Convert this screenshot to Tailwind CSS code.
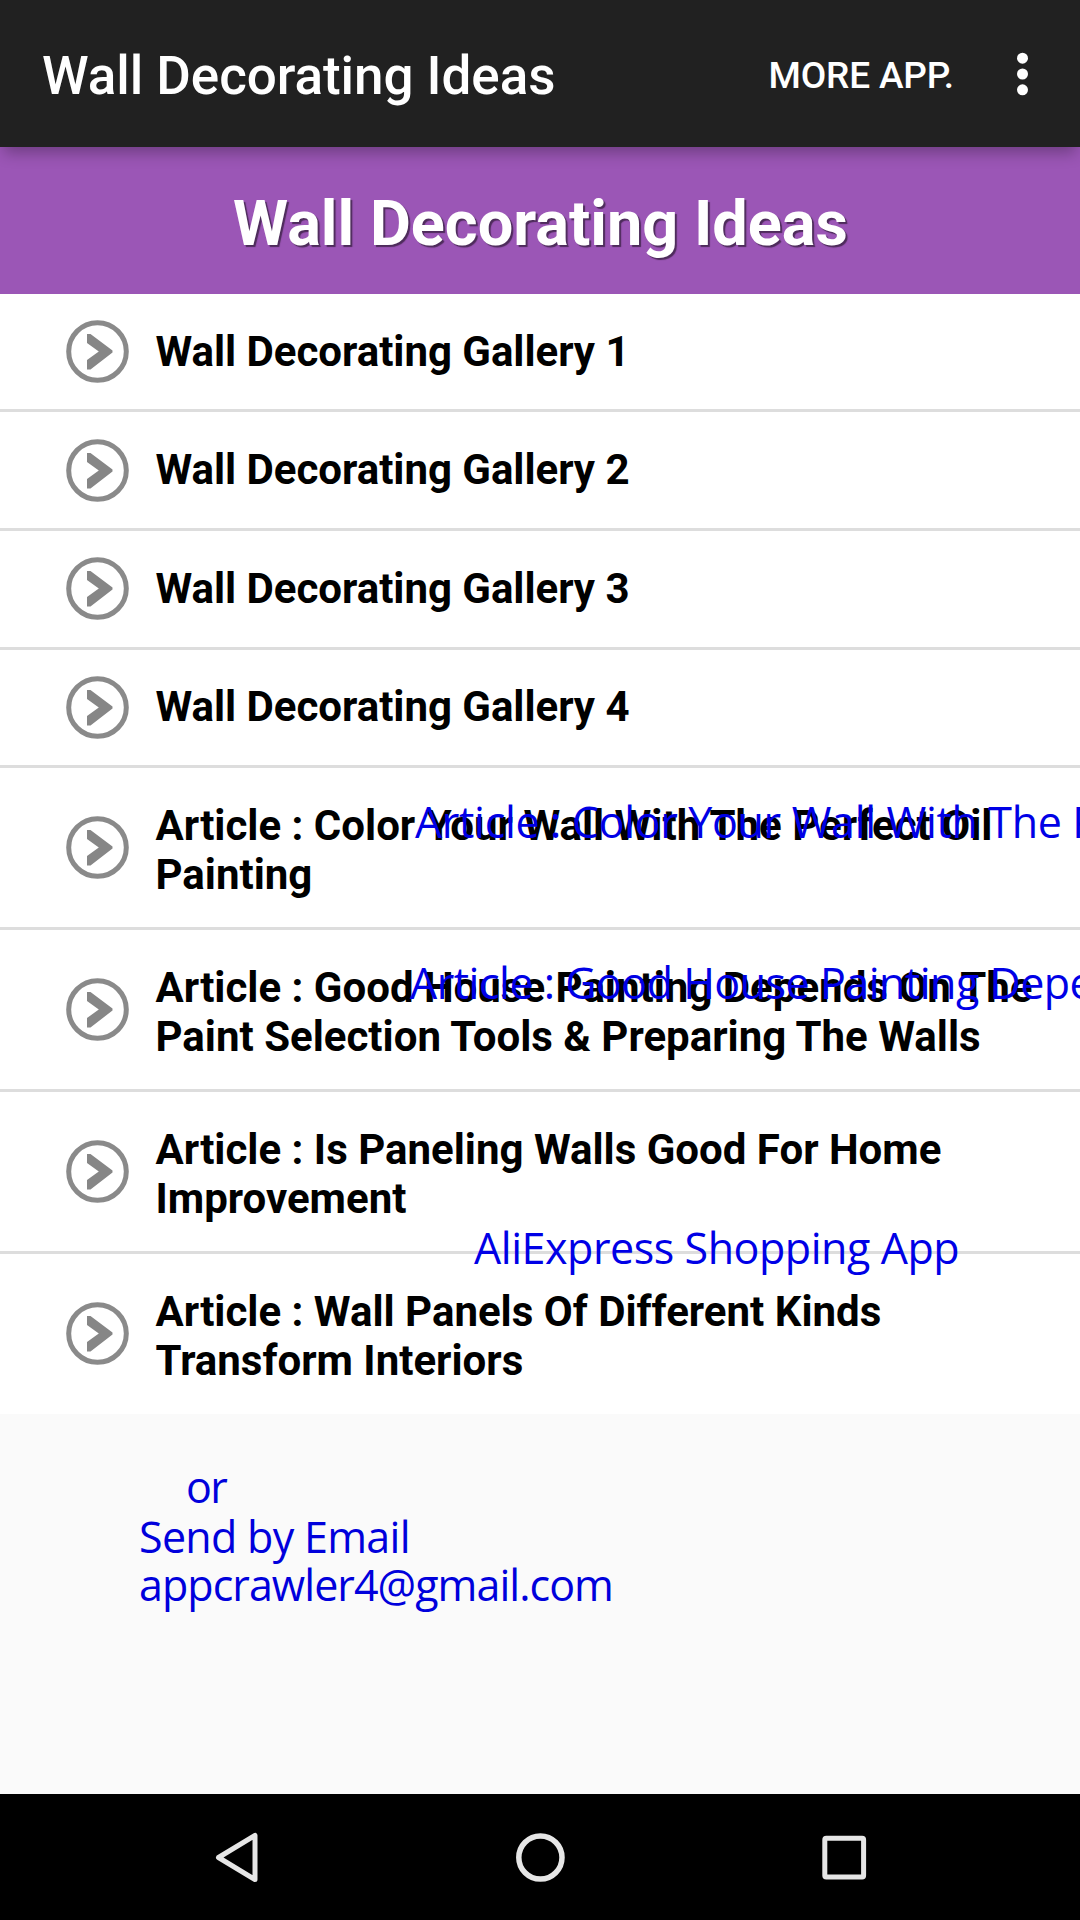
<!DOCTYPE html>
<html lang="en">
<head>
<meta charset="utf-8">
<title>Wall Decorating Ideas</title>
<script src="https://cdn.jsdelivr.net/npm/@tailwindcss/browser@4"></script>
</head>
<body class="bg-black">
<svg class="hidden">
  <symbol id="go" viewBox="0 0 63 63">
    <circle cx="31.5" cy="31.5" r="28.8" fill="none" stroke="#8a8a8a" stroke-width="5"/>
    <path d="M21 14 L24.500 14 L46.500 30.500 V32.500 L24.500 49.500 L21 49.500 V40 L32.800 31.500 L21 23 Z" fill="#868686"/>
  </symbol>
</svg>
<div class="relative flex h-[1920px] w-[1080px] flex-col overflow-hidden bg-[#fafafa] font-['Roboto',sans-serif]">
  <header class="relative z-10 flex h-[147px] shrink-0 items-center bg-[#212121] pl-[42px] text-white shadow-[0_10px_14px_-4px_rgba(0,0,0,0.28)]">
    <h1 class="flex-1 pt-[7px] text-[53px] font-medium tracking-[-0.06px]">Wall Decorating Ideas</h1>
    <span class="pt-1 text-[37px] font-medium tracking-[-0.15px]">MORE APP.</span>
    <svg class="ml-[61px] mr-[50px] h-[46px] w-[15px]" viewBox="0 0 15 46" fill="#fff"><circle cx="7.500" cy="7.200" r="5.500"/><circle cx="7.500" cy="23" r="5.500"/><circle cx="7.500" cy="38.800" r="5.500"/></svg>
  </header>
  <div class="flex h-[147px] shrink-0 items-center justify-center bg-[#9b56b6] pt-[8px] pl-px">
    <h2 class="text-[63px] font-bold text-white [text-shadow:2px_2px_1px_rgba(0,0,0,0.5)]">Wall Decorating Ideas</h2>
  </div>
  <ul class="shrink-0 bg-white text-[42px] leading-[49.5px] font-bold text-black">
    <li class="flex h-[118px] items-center border-b-3 border-[#dddddd] pl-[66px]"><svg class="h-[63px] w-[63px] shrink-0"><use href="#go"/></svg><span class="self-start pt-[32.500px] pl-[26.500px] tracking-[-0.03px]">Wall Decorating Gallery 1</span></li>
    <li class="flex h-[119px] items-center border-b-3 border-[#dddddd] pl-[66px]"><svg class="h-[63px] w-[63px] shrink-0"><use href="#go"/></svg><span class="self-start pt-[32.500px] pl-[26.500px] tracking-[-0.03px]">Wall Decorating Gallery 2</span></li>
    <li class="flex h-[118.5px] items-center border-b-3 border-[#dddddd] pl-[66px]"><svg class="h-[63px] w-[63px] shrink-0"><use href="#go"/></svg><span class="self-start pt-[32.500px] pl-[26.500px] tracking-[-0.03px]">Wall Decorating Gallery 3</span></li>
    <li class="flex h-[118.5px] items-center border-b-3 border-[#dddddd] pl-[66px]"><svg class="h-[63px] w-[63px] shrink-0"><use href="#go"/></svg><span class="self-start pt-[32.500px] pl-[26.500px] tracking-[-0.03px]">Wall Decorating Gallery 4</span></li>
    <li class="flex h-[162px] items-center border-b-3 border-[#dddddd] pl-[66px]"><svg class="h-[63px] w-[63px] shrink-0"><use href="#go"/></svg><span class="self-start pt-[32.500px] pl-[26.500px]">Article : Color Your Wall With The Perfect Oil<br>Painting</span></li>
    <li class="flex h-[162px] items-center border-b-3 border-[#dddddd] pl-[66px]"><svg class="h-[63px] w-[63px] shrink-0"><use href="#go"/></svg><span class="self-start pt-[32.500px] pl-[26.500px]">Article : Good House Painting Depends On The<br>Paint Selection Tools &amp; Preparing The Walls</span></li>
    <li class="flex h-[162px] items-center border-b-3 border-[#dddddd] pl-[66px]"><svg class="h-[63px] w-[63px] shrink-0"><use href="#go"/></svg><span class="self-start pt-[32.500px] pl-[26.500px]">Article : Is Paneling Walls Good For Home<br>Improvement</span></li>
    <li class="flex h-[159.5px] items-center pl-[66px]"><svg class="h-[63px] w-[63px] shrink-0"><use href="#go"/></svg><span class="self-start pt-[32.500px] pl-[26.500px]">Article : Wall Panels Of Different Kinds<br>Transform Interiors</span></li>
  </ul>
  <div class="flex flex-1 flex-col items-start pt-[42px] pl-[139px] font-['Open_Sans',sans-serif] text-[43px] whitespace-nowrap text-[#0000dc]">
    <p class="pt-[6px] pl-[47px] leading-[50px] tracking-[-1.5px]">or</p>
    <p class="leading-[50px] tracking-[-0.7px]">Send by Email</p>
    <p class="leading-[46px] tracking-[-0.95px]">appcrawler4@gmail.com</p>
  </div>
  <nav class="flex h-[126px] shrink-0 items-center bg-black pl-[212px]">
    <svg class="h-[54px] w-[50px]" viewBox="0 0 50 54" fill="none" stroke="#e6e6e6" stroke-width="5" stroke-linejoin="round"><path d="M6.500 27.500 L43 5.500 V49.500 Z"/></svg>
    <svg class="ml-[251px] h-[54px] w-[54px]" viewBox="0 0 54 54" fill="none" stroke="#e6e6e6" stroke-width="5.500"><circle cx="27.400" cy="27.500" r="21.600"/></svg>
    <svg class="ml-[250px] h-[54px] w-[54px]" viewBox="0 0 54 54" fill="none" stroke="#e6e6e6" stroke-width="5"><rect x="7.800" y="8.200" width="38.800" height="38.800" rx="1.500"/></svg>
  </nav>
  <!-- Floating labels that lie over the list -->
  <div class="font-['Open_Sans',sans-serif] text-[43px] leading-[60px] whitespace-nowrap text-[#0000e6]">
    <p class="absolute top-[792px] left-[415px] tracking-[-0.33px]">Article : Color Your Wall With The Perfect Oil Painting</p>
    <p class="absolute top-[953px] left-[410px] tracking-[-0.5px]">Article : Good House Painting Depends On The Paint</p>
    <p class="absolute top-[1218px] left-[474px] tracking-[-0.45px]">AliExpress Shopping App</p>
  </div>
</div>
</body>
</html>
